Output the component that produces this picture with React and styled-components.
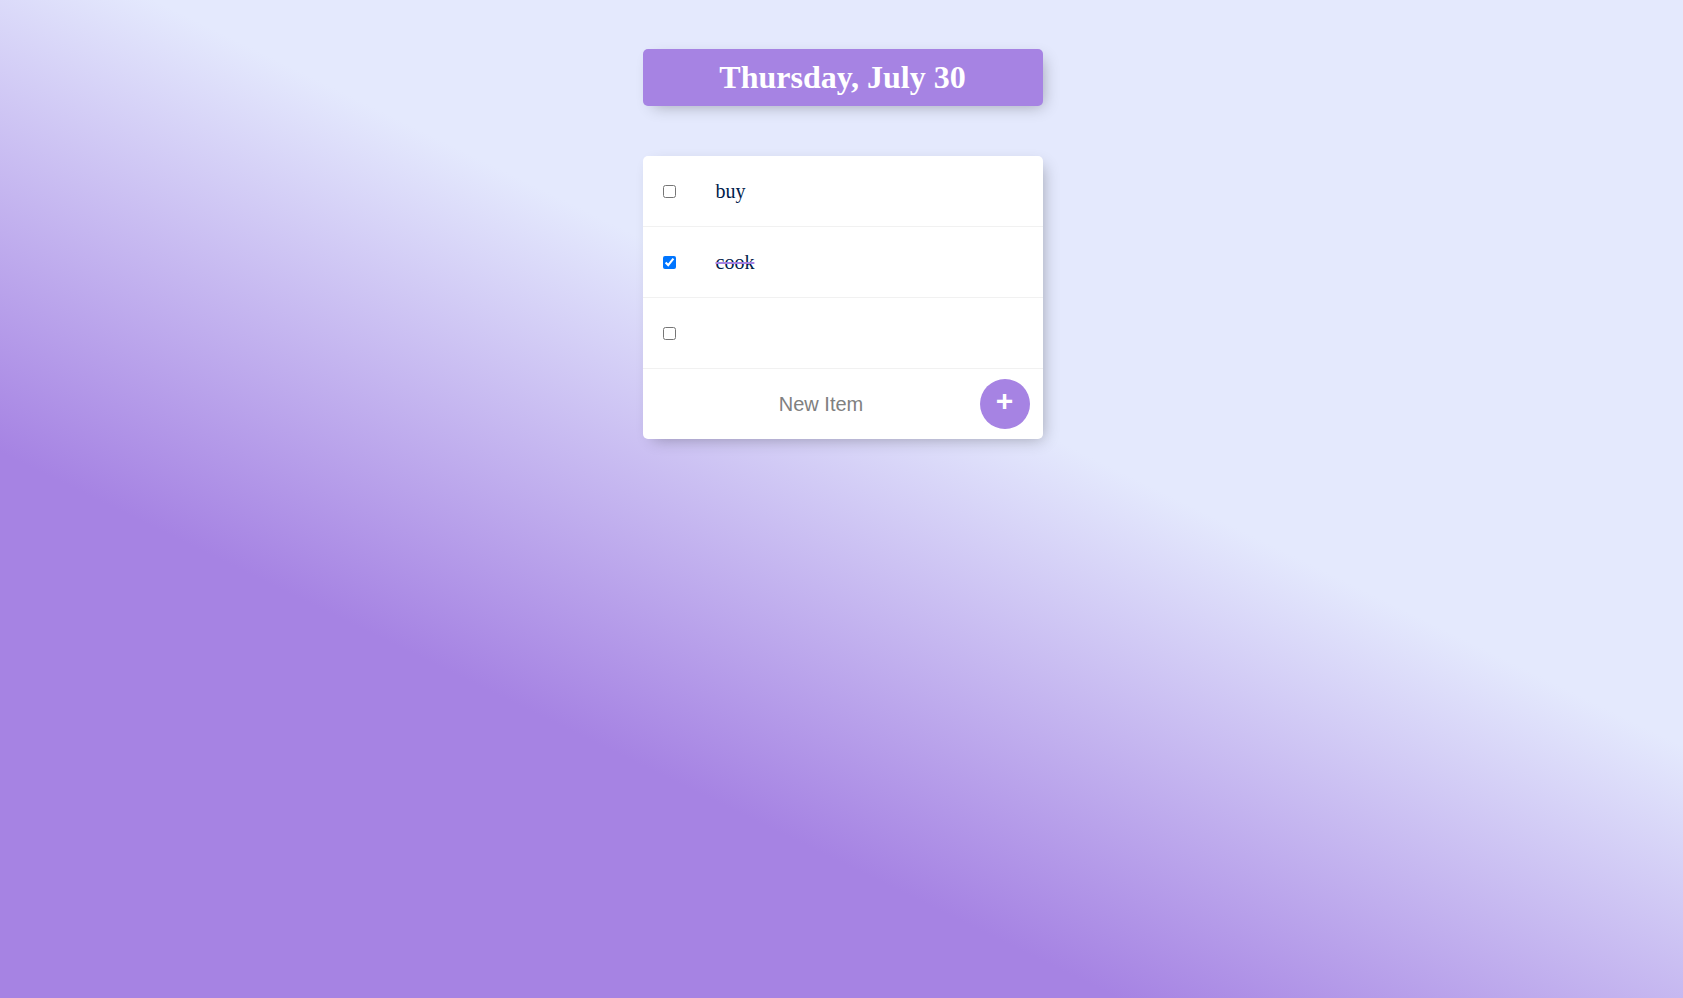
import React, { useState } from "react";
import styled, { createGlobalStyle } from "styled-components";

const GlobalStyle = createGlobalStyle`
  html {
    min-height: 100%;
    background-color: #e4e9fd;
    background-image: linear-gradient(26deg, #a683e3 30%, #e4e9fd 59%);
    font-family: "Liberation Serif", "Times New Roman", serif;
  }
  body {
    margin: 0;
    padding: 0 0 0 2px;
  }
`;

const initialItems = [
  { id: 1, text: "buy", done: false },
  { id: 2, text: "cook", done: true },
  { id: 3, text: "", done: false },
];

export default function App() {
  const [items, setItems] = useState(initialItems);
  const [newItem, setNewItem] = useState("");

  const toggle = (id) =>
    setItems((list) =>
      list.map((item) => (item.id === id ? { ...item, done: !item.done } : item))
    );

  const addItem = (e) => {
    e.preventDefault();
    if (!newItem.trim()) return;
    setItems((list) => [...list, { id: Date.now(), text: newItem, done: false }]);
    setNewItem("");
  };

  return (
    <>
      <GlobalStyle />
      <Heading>
        <Title>Thursday, July 30</Title>
      </Heading>
      <Box>
        {items.map((item) => (
          <Item key={item.id}>
            <Checkbox
              type="checkbox"
              checked={item.done}
              onChange={() => toggle(item.id)}
            />
            <ItemText $done={item.done}>{item.text}</ItemText>
          </Item>
        ))}
        <NewItemForm onSubmit={addItem}>
          <NewItemInput
            type="text"
            placeholder="New Item"
            autoComplete="off"
            value={newItem}
            onChange={(e) => setNewItem(e.target.value)}
          />
          <AddButton type="submit">+</AddButton>
        </NewItemForm>
      </Box>
    </>
  );
}

const Box = styled.div`
  max-width: 400px;
  margin: 50px auto;
  background: #ffffff;
  border-radius: 5px;
  box-shadow: 5px 5px 15px -5px rgba(0, 0, 0, 0.3);
`;

const Heading = styled(Box)`
  margin-top: 49px;
  background-color: #a683e3;
  text-align: center;
`;

const Title = styled.h1`
  margin: 0;
  padding: 10px;
  color: #ffffff;
  font-size: 32px;
  font-weight: bold;
`;

const Item = styled.div`
  min-height: 70px;
  display: flex;
  align-items: center;
  border-bottom: 1px solid #f1f1f1;
`;

const Checkbox = styled.input`
  margin: 20px;
  width: 13px;
  height: 13px;
`;

const ItemText = styled.p`
  margin: 0;
  padding: 20px;
  font-size: 20px;
  font-weight: 200;
  color: #00204a;
  text-decoration: ${({ $done }) => ($done ? "line-through" : "none")};
  text-decoration-color: #a683e3;
`;

const NewItemForm = styled.form`
  min-height: 70px;
  display: flex;
  align-items: center;
  margin-left: 20px;
  text-align: center;
`;

const NewItemInput = styled.input`
  width: 313px;
  height: 60px;
  padding: 1px 2px;
  border: none;
  background: transparent;
  text-align: center;
  font-family: "Liberation Sans", Arial, sans-serif;
  font-size: 20px;
  font-weight: 200;
  color: #333333;

  &::placeholder {
    color: grey;
    opacity: 1;
  }

  &:focus {
    outline: none;
    box-shadow: inset 0 -3px 0 0 #a683e3;
  }
`;

const AddButton = styled.button`
  min-height: 50px;
  width: 50px;
  border-radius: 50%;
  border: 0;
  background-color: #a683e3;
  color: #ffffff;
  font-family: "Liberation Sans", Arial, sans-serif;
  font-size: 30px;
  font-weight: bold;
  padding: 0 0 6px;
  cursor: pointer;
`;
